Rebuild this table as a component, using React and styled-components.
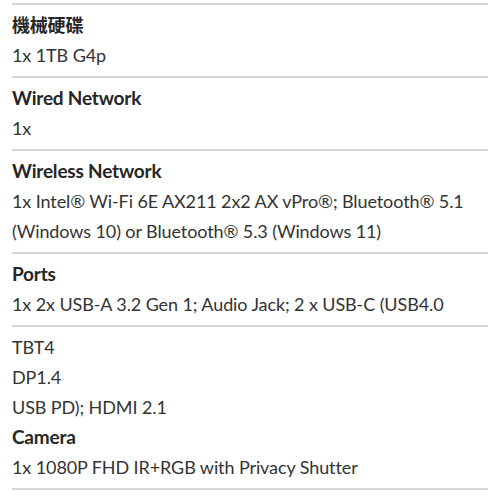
import React from 'react';
import styled, { createGlobalStyle } from 'styled-components';

const GlobalStyle = createGlobalStyle`
  body {
    margin: 0;
    background: #fff;
    font-family: Lato, "Noto Sans CJK TC", sans-serif;
    color: #333;
  }
`;

const SpecList = styled.div`
  padding: 3px 12px 0;
  width: 476px;
`;

const Section = styled.section`
  border-top: 2px solid #d6d6d6;
  padding: 5px 0 6px;
  &:last-child {
    border-bottom: 2px solid #d6d6d6;
  }
`;

const Heading = styled.div`
  height: 30px;
  font-size: ${(p) => (p.$cjk ? '18px' : '19px')};
  font-weight: 700;
  line-height: 30px;
  color: #262626;
  letter-spacing: -0.2px;
`;

const Value = styled.div`
  height: 30px;
  font-size: 18px;
  line-height: 30px;
  color: #333;
  letter-spacing: -0.1px;
`;

const specs = [
  { title: '機械硬碟', cjk: true, lines: ['1x 1TB G4p'] },
  { title: 'Wired Network', lines: ['1x'] },
  {
    title: 'Wireless Network',
    lines: [
      '1x Intel® Wi-Fi 6E AX211 2x2 AX vPro®; Bluetooth® 5.1',
      '(Windows 10) or Bluetooth® 5.3 (Windows 11)',
    ],
  },
  { title: 'Ports', lines: ['1x 2x USB-A 3.2 Gen 1; Audio Jack; 2 x USB-C (USB4.0'] },
];

const App = () => {
  return (
    <>
      <GlobalStyle />
      <SpecList>
        {specs.map((s) => (
          <Section key={s.title}>
            <Heading $cjk={s.cjk}>{s.title}</Heading>
            {s.lines.map((l) => (
              <Value key={l}>{l}</Value>
            ))}
          </Section>
        ))}
        <Section>
          <Value>TBT4</Value>
          <Value>DP1.4</Value>
          <Value>USB PD); HDMI 2.1</Value>
          <Heading>Camera</Heading>
          <Value>1x 1080P FHD IR+RGB with Privacy Shutter</Value>
        </Section>
      </SpecList>
    </>
  );
};

export default App;
